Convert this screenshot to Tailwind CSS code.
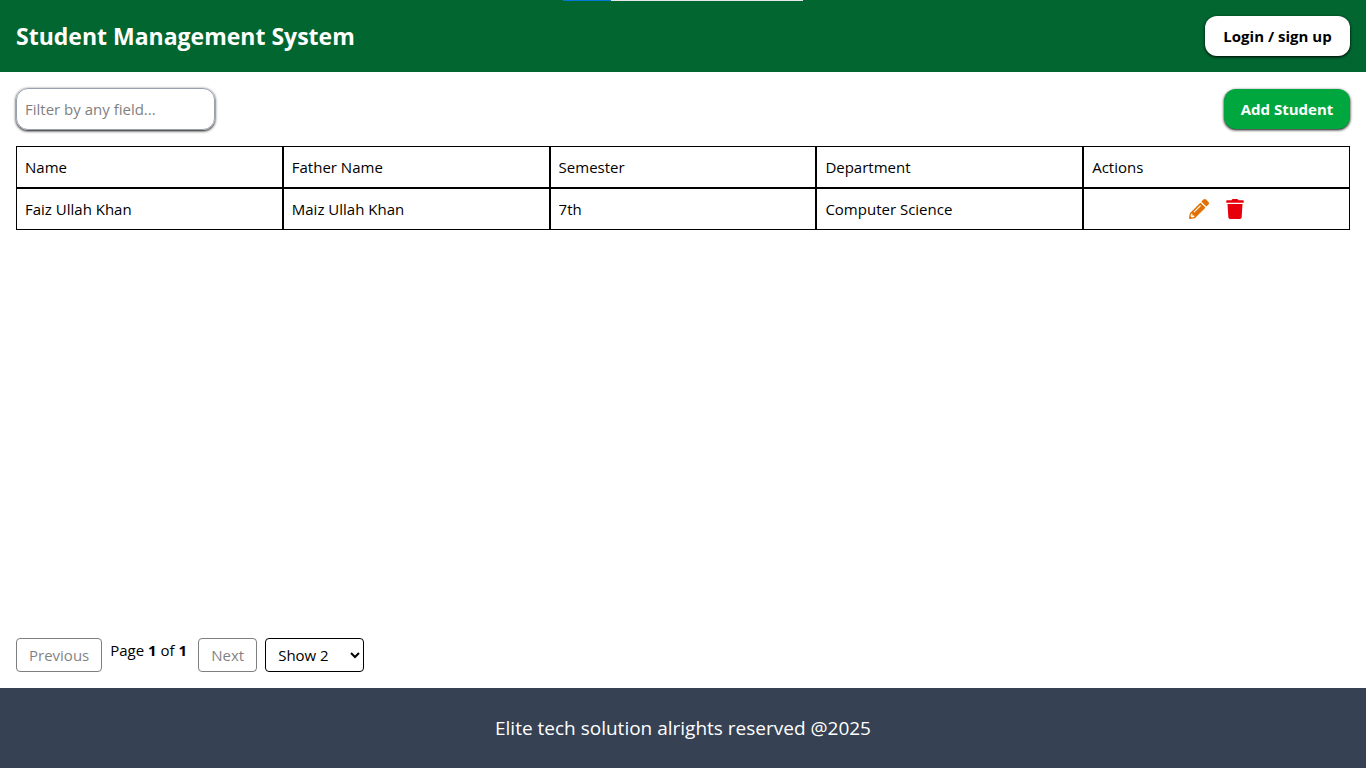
<!DOCTYPE html>
<html lang="en">
<head>
<meta charset="utf-8">
<meta name="viewport" content="width=device-width, initial-scale=1">
<title>Student Management System</title>
<script src="https://cdn.jsdelivr.net/npm/@tailwindcss/browser@4"></script>
</head>
<body class="relative flex min-h-screen flex-col bg-white font-['Segoe_UI','Open_Sans',sans-serif] text-[15px] leading-6 text-black">
  <div class="absolute top-0 left-1/2 flex h-px w-60 -translate-x-1/2 bg-gray-200"><div class="h-px w-12 bg-[#0078d7]"></div></div>
  <header class="flex items-center justify-between bg-green-800 p-4">
    <h1 class="text-[23px] leading-8 font-[670] text-white">Student Management System</h1>
    <button class="min-w-[145px] rounded-xl bg-white px-4 py-2 text-[15px] font-bold whitespace-nowrap shadow-[0_1px_3px_black]">Login / sign up</button>
  </header>
  <main class="flex flex-1 flex-col p-4">
    <div class="mb-4 flex items-center justify-between">
      <input type="text" aria-label="Filter students" placeholder="Filter by any field..." class="w-[199px] rounded-xl border border-gray-400 p-2 shadow-[0_1px_3px_black] placeholder:text-[#7f7f7f]">
      <button class="min-w-[126px] rounded-xl bg-green-600 px-4 py-2 font-bold whitespace-nowrap text-white shadow-[0_1px_3px_black]">Add Student</button>
    </div>
    <table class="w-full table-fixed border-separate border-spacing-0 text-left">
      <thead>
        <tr>
          <th class="border border-black p-2 font-normal">Name</th>
          <th class="border border-black p-2 font-normal">Father Name</th>
          <th class="border border-black p-2 font-normal">Semester</th>
          <th class="border border-black p-2 font-normal">Department</th>
          <th class="border border-black p-2 font-normal">Actions</th>
        </tr>
      </thead>
      <tbody>
        <tr>
          <td class="border border-black p-2">Faiz Ullah Khan</td>
          <td class="border border-black p-2">Maiz Ullah Khan</td>
          <td class="border border-black p-2">7th</td>
          <td class="border border-black p-2">Computer Science</td>
          <td class="border border-black p-2">
            <div class="flex h-6 items-center justify-center gap-4">
              <button aria-label="Edit" class="text-amber-600"><svg class="size-5" viewBox="0 0 512 512" fill="currentColor"><path d="M497.9 142.1l-46.1 46.1c-4.7 4.7-12.3 4.7-17 0l-111-111c-4.7-4.7-4.7-12.3 0-17l46.1-46.1c18.7-18.7 49.1-18.7 67.9 0l60.1 60.1c18.8 18.7 18.8 49.1 0 67.9zM284.2 99.8L21.6 362.4.4 483.9c-2.9 16.4 11.4 30.6 27.8 27.8l121.5-21.3 262.6-262.6c4.7-4.7 4.7-12.3 0-17l-111-111c-4.8-4.7-12.4-4.7-17.1 0zM124.1 339.9c-5.5-5.5-5.5-14.3 0-19.8l154-154c5.5-5.5 14.3-5.5 19.8 0s5.5 14.3 0 19.8l-154 154c-5.5 5.5-14.3 5.5-19.8 0zM88 424h48v36.3l-64.5 11.3-31.1-31.1L51.7 376H88v48z"/></svg></button>
              <button aria-label="Delete" class="text-red-600"><svg class="size-5" viewBox="0 0 448 512" fill="currentColor"><path d="M432 32H312l-9.4-18.7A24 24 0 0 0 281.1 0H166.8a23.72 23.72 0 0 0-21.4 13.3L136 32H16A16 16 0 0 0 0 48v32a16 16 0 0 0 16 16h416a16 16 0 0 0 16-16V48a16 16 0 0 0-16-16zM53.2 467a48 48 0 0 0 47.9 45h245.8a48 48 0 0 0 47.9-45L416 128H32z"/></svg></button>
            </div>
          </td>
        </tr>
      </tbody>
    </table>
    <nav aria-label="Pagination" class="mt-auto flex gap-2">
      <button disabled class="rounded border border-black px-3 py-1 opacity-50">Previous</button>
      <span class="min-w-20">Page <strong>1</strong> of <strong>1</strong></span>
      <button disabled class="rounded border border-black px-3 py-1 opacity-50">Next</button>
      <select aria-label="Rows per page" class="w-[99px] rounded border border-black px-2 py-1">
        <option>Show 2</option>
        <option>Show 5</option>
        <option>Show 10</option>
      </select>
    </nav>
  </main>
  <footer class="flex h-20 items-center justify-center bg-gray-700 text-[19px] text-white">
    <p>Elite tech solution alrights reserved @2025</p>
  </footer>
</body>
</html>
